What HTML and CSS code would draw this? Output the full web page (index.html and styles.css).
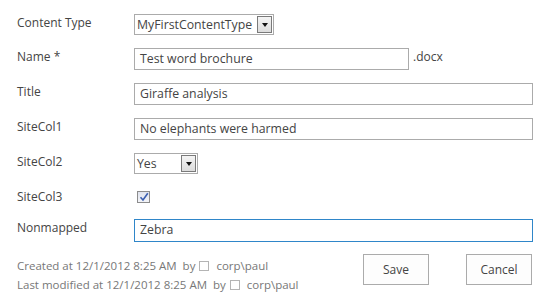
FILE: index.html
```html
<!DOCTYPE html>
<html>
<head>
<meta charset="utf-8">
<link rel="stylesheet" href="styles.css">
</head>
<body>
<div class="form">
  <div class="row r-select">
    <div class="label">Content Type</div>
    <div class="field">
      <div class="select ct"><span class="sel-text">MyFirstContentType</span><span class="sel-btn"><span class="tri"></span></span></div>
    </div>
  </div>
  <div class="row">
    <div class="label">Name <span class="req">*</span></div>
    <div class="field">
      <div class="input name">Test word brochure</div><span class="ext">.docx</span>
    </div>
  </div>
  <div class="row">
    <div class="label">Title</div>
    <div class="field"><div class="input wide">Giraffe analysis</div></div>
  </div>
  <div class="row">
    <div class="label">SiteCol1</div>
    <div class="field"><div class="input wide">No elephants were harmed</div></div>
  </div>
  <div class="row r-select">
    <div class="label">SiteCol2</div>
    <div class="field">
      <div class="select yes"><span class="sel-text">Yes</span><span class="sel-btn"><span class="tri"></span></span></div>
    </div>
  </div>
  <div class="row r-check">
    <div class="label">SiteCol3</div>
    <div class="field">
      <span class="check"><svg width="10" height="10" viewBox="0 0 10 10"><path d="M1.5 5.2 L4 8 L8.8 1.2" fill="none" stroke="#3b5fb0" stroke-width="1.6"/></svg></span>
    </div>
  </div>
  <div class="row">
    <div class="label">Nonmapped</div>
    <div class="field"><div class="input wide focus">Zebra</div></div>
  </div>
  <div class="footer">
    <div class="meta">
      <div>Created at 12/1/2012 8:25 AM&nbsp; by <span class="pres"></span> corp\paul</div>
      <div>Last modified at 12/1/2012 8:25 AM&nbsp; by <span class="pres"></span> corp\paul</div>
    </div>
    <div class="buttons">
      <button class="btn">Save</button>
      <button class="btn">Cancel</button>
    </div>
  </div>
</div>
</body>
</html>
```

FILE: styles.css
```css
html, body {
  margin: 0;
  padding: 0;
  background: #fff;
}
body {
  font-family: "Open Sans", "Noto Sans", sans-serif;
  font-size: 12px;
  color: #444;
}
.form {
  padding: 14px 0 0 17px;
  width: 515px;
  display: flex;
  flex-direction: column;
  gap: 13px;
}
.row {
  display: flex;
  align-items: flex-start;
  height: 22px;
}
.row.r-select { height: 21px; }
.row.r-check { height: 18px; margin-top: 1px; }
.label {
  width: 117px;
  flex: none;
  line-height: 16px;
  padding-top: 1px;
  color: #444;
}
.req { color: #444; }
.field {
  display: flex;
  align-items: flex-start;
}
.input {
  box-sizing: border-box;
  height: 22px;
  border: 1px solid #ababab;
  padding: 0 5px;
  line-height: 20px;
  font-size: 12.3px;
  color: #444;
  white-space: nowrap;
  overflow: hidden;
}
.input.name { width: 275px; }
.input.wide { width: 399px; }
.input.focus { border-color: #2f86c9; height: 23px; }
.ext {
  margin-left: 4px;
  line-height: 18px;
  color: #444;
}
.select {
  box-sizing: border-box;
  height: 21px;
  border: 1px solid #ababab;
  display: flex;
  align-items: center;
  justify-content: space-between;
  padding: 0 1px 0 2px;
  font-size: 12.3px;
  color: #444;
}
.select.ct { width: 140px; }
.select.yes { width: 64px; }
.sel-text { line-height: 19px; }
.sel-btn {
  box-sizing: border-box;
  width: 15px;
  height: 17px;
  border: 1px solid #7a7a7a;
  background: linear-gradient(#f4f4f4, #dcdcdc);
  display: flex;
  align-items: center;
  justify-content: center;
}
.tri {
  width: 0;
  height: 0;
  border-left: 3.5px solid transparent;
  border-right: 3.5px solid transparent;
  border-top: 4px solid #111;
  margin-top: 1px;
}
.check {
  box-sizing: border-box;
  margin-left: 3px;
  margin-top: 3px;
  width: 13px;
  height: 12px;
  border: 1px solid #8c8c8c;
  background: linear-gradient(#dfe3ee, #f3f4f8);
  display: flex;
  align-items: center;
  justify-content: center;
}
.footer {
  display: flex;
  justify-content: space-between;
  align-items: flex-start;
}
.meta {
  padding-top: 2px;
  color: #777;
  font-size: 11.5px;
  line-height: 19px;
}
.pres {
  display: inline-block;
  width: 8px;
  height: 8px;
  border: 1px solid #b4b4b4;
  margin: 0 4px 0 1px;
  vertical-align: -1px;
}
.buttons {
  display: flex;
  gap: 37px;
}
.btn {
  box-sizing: border-box;
  width: 66px;
  height: 31px;
  border: 1px solid #ababab;
  background: #fdfdfd;
  font-family: "Open Sans", "Noto Sans", sans-serif;
  font-size: 12px;
  color: #444;
  padding: 0;
}
```
